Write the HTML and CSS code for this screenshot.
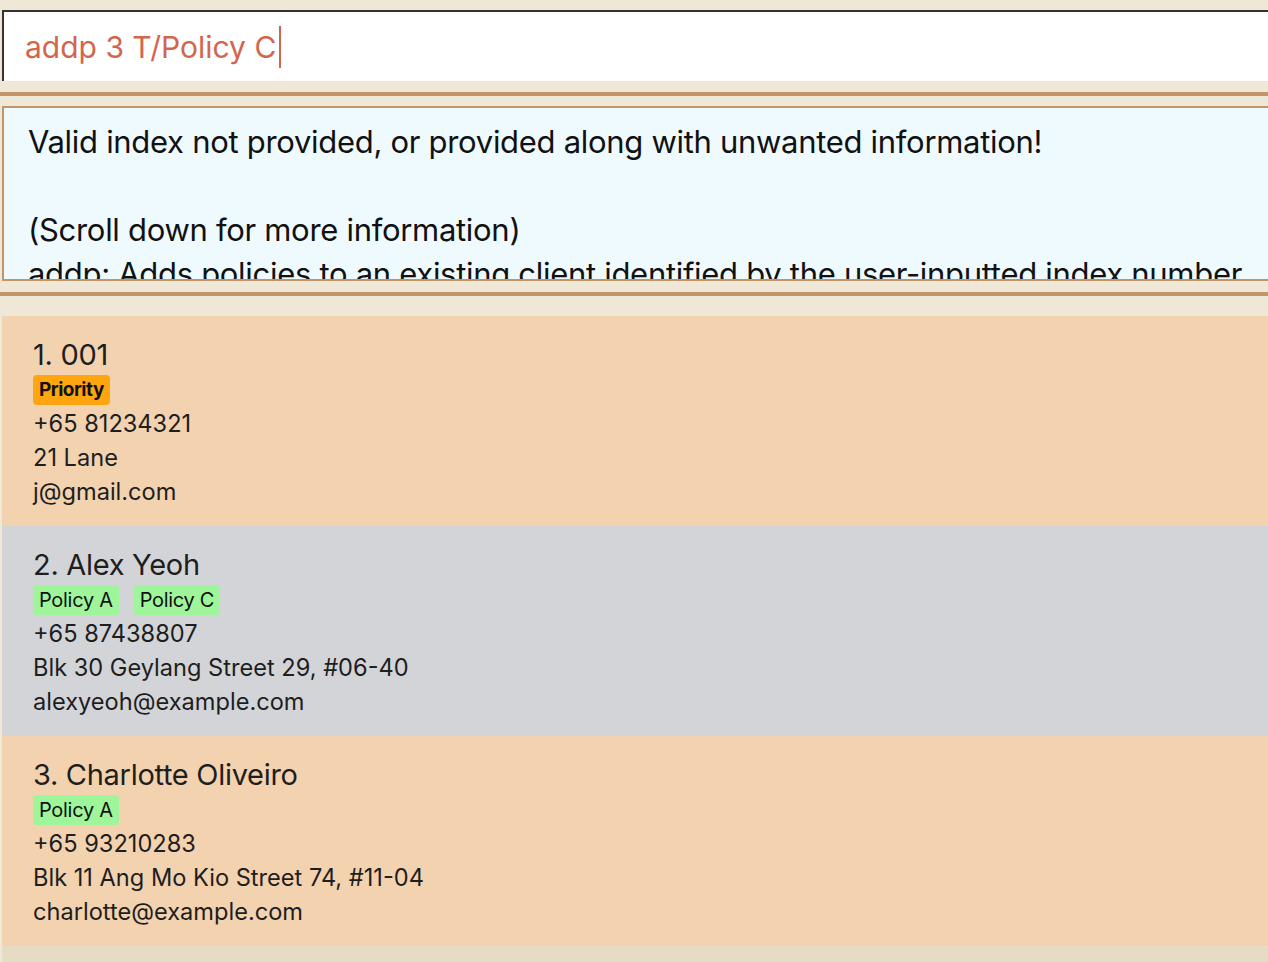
FILE: index.html
```html
<!DOCTYPE html>
<html>
<head>
<meta charset="utf-8">
<link rel="stylesheet" href="styles.css">
</head>
<body>
<div class="app">
  <div class="command-box">
    <span class="command-text">addp 3 T/Policy C</span><span class="caret"></span>
  </div>
  <div class="divider first"></div>
  <div class="result-box">
    <p>Valid index not provided, or provided along with unwanted information!</p>
    <p>&nbsp;</p>
    <p>(Scroll down for more information)</p>
    <p>addp: Adds policies to an existing client identified by the user-inputted index number</p>
  </div>
  <div class="divider second"></div>
  <div class="list">
    <div class="card peach">
      <div class="name">1. 001</div>
      <div class="tags"><span class="tag priority">Priority</span></div>
      <div class="field">+65 81234321</div>
      <div class="field">21 Lane</div>
      <div class="field">j@gmail.com</div>
    </div>
    <div class="card grey">
      <div class="name">2. Alex Yeoh</div>
      <div class="tags"><span class="tag policy">Policy A</span><span class="tag policy">Policy C</span></div>
      <div class="field">+65 87438807</div>
      <div class="field">Blk 30 Geylang Street 29, #06-40</div>
      <div class="field">alexyeoh@example.com</div>
    </div>
    <div class="card peach">
      <div class="name">3. Charlotte Oliveiro</div>
      <div class="tags"><span class="tag policy">Policy A</span></div>
      <div class="field">+65 93210283</div>
      <div class="field">Blk 11 Ang Mo Kio Street 74, #11-04</div>
      <div class="field">charlotte@example.com</div>
    </div>
  </div>
</div>
</body>
</html>
```

FILE: styles.css
```css
html, body {
  margin: 0;
  padding: 0;
  height: 100%;
  background: #f0e8d6;
  font-family: Inter, "Noto Sans", sans-serif;
  color: #1e1e1e;
  overflow: hidden;
}

.app {
  display: flex;
  flex-direction: column;
  height: 100%;
}

.command-box {
  margin: 10px 0 0 2px;
  height: 69px;
  background: #ffffff;
  border-top: 2px solid #333333;
  border-left: 2px solid #333333;
  display: flex;
  align-items: center;
  padding-left: 21px;
  font-size: 30px;
  color: #d3654c;
  flex: none;
}

.caret {
  display: inline-block;
  width: 2px;
  height: 42px;
  background: #d3654c;
  margin-left: 3px;
}

.divider {
  height: 4px;
  background: #c29468;
  flex: none;
}
.divider.first {
  margin-top: 11px;
}
.divider.second {
  margin-top: 11px;
}

.result-box {
  margin: 10px 0 0 2px;
  border: 2px solid #c29468;
  border-right: none;
  background: #effaff;
  overflow: hidden;
  padding: 12px 0 0 24px;
  box-sizing: border-box;
  height: 175px;
  flex: none;
  font-size: 31px;
  color: #111111;
  letter-spacing: -0.3px;
}
.result-box p {
  margin: 0;
  line-height: 44px;
  white-space: nowrap;
}

.list {
  margin: 20px 0 0 2px;
  flex: 1;
  background: #e6dcc4;
}

.card {
  height: 210px;
  box-sizing: border-box;
  padding: 20px 0 0 31px;
}
.card.peach { background: #f3d2b0; }
.card.grey { background: #d3d4d8; }

.name {
  font-size: 29px;
  line-height: 38px;
  letter-spacing: -0.3px;
  color: #1e1e1e;
}

.tags {
  display: flex;
  gap: 15px;
  height: 32px;
  align-items: center;
}
.tag {
  display: inline-block;
  height: 30px;
  line-height: 30px;
  padding: 0 6px;
  border-radius: 4px;
  font-size: 20px;
  letter-spacing: -0.3px;
  color: #111;
}
.tag.priority {
  background: #ffa510;
  font-weight: 700;
  font-size: 19px;
  letter-spacing: -0.5px;
}
.tag.policy {
  background: #9ef59a;
}

.field {
  font-size: 23.6px;
  line-height: 34px;
  color: #1e1e1e;
}
.tags + .field {
  margin-top: 1px;
}
```
